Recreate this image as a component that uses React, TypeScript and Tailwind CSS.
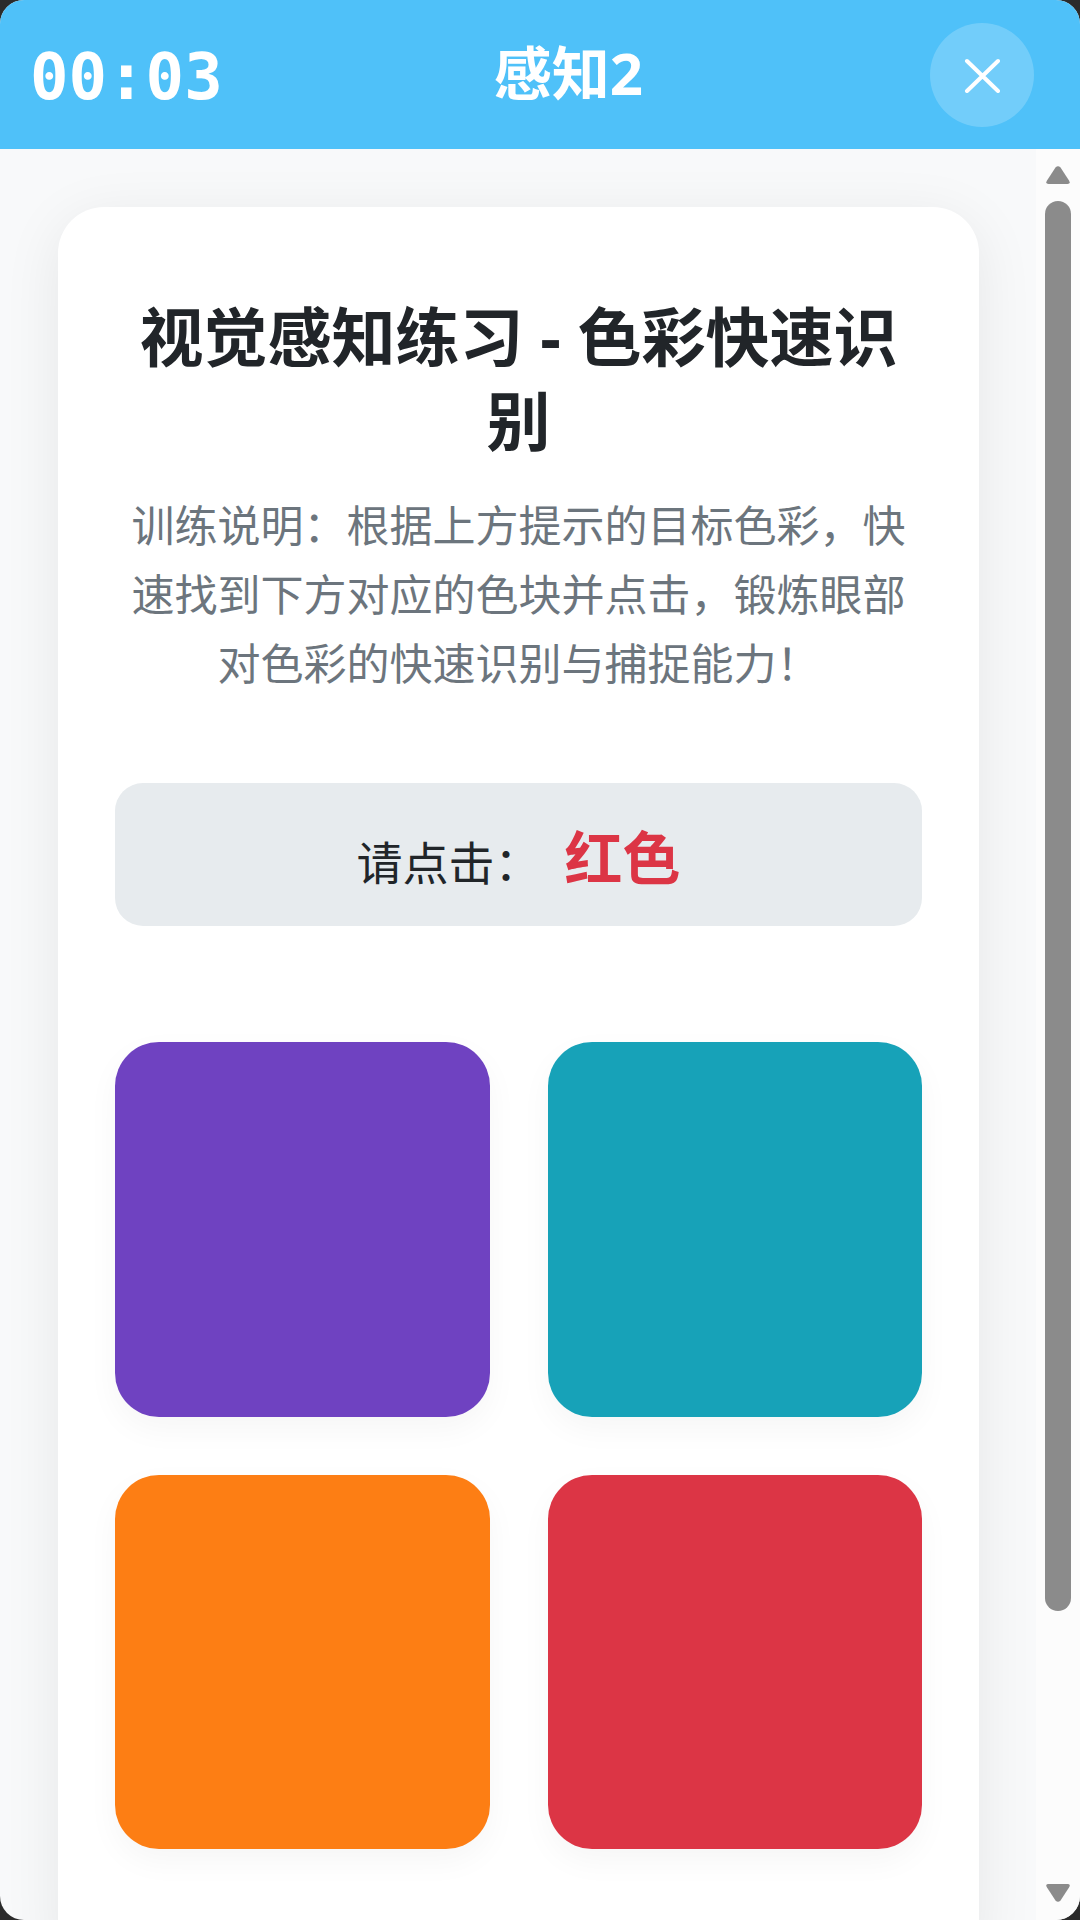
const tiles = [
  { name: "紫色", color: "bg-[#6f42c1]" },
  { name: "青色", color: "bg-[#17a2b8]" },
  { name: "橙色", color: "bg-[#fd7e14]" },
  { name: "红色", color: "bg-[#dc3545]" },
];

function Header() {
  return (
    <header className="flex h-[149px] shrink-0 items-center justify-between bg-[#4fc1f9] pr-[46px] pl-[30px] text-white">
      <time className="pt-1 font-['DejaVu_Sans_Mono',monospace] text-[64px] leading-none font-bold">
        00:03
      </time>
      <h1 className="mr-4 pb-1 text-[58px] leading-none font-bold">感知2</h1>
      <button
        type="button"
        aria-label="关闭"
        className="flex size-[104px] items-center justify-center rounded-full bg-white/20"
      >
        <svg viewBox="0 0 36 36" className="size-9" fill="none" stroke="currentColor" strokeWidth="4" strokeLinecap="round">
          <path d="M3 4 34 34M34 4 3 34" />
        </svg>
      </button>
    </header>
  );
}

function ScrollRail() {
  return (
    <div aria-hidden="true" className="flex w-11 shrink-0 flex-col items-center gap-[17px] bg-[#fcfcfc] pt-[17px] pb-[18px]">
      <svg viewBox="0 0 24 18" className="h-[18px] w-6 fill-[#8b8b8b]">
        <path d="M9.500 1.500Q12-1 14.500 1.500L23 14.500Q25 18 21.500 18H2.500Q-1 18 1 14.500Z" />
      </svg>
      <div className="flex w-full flex-1 flex-col items-center">
        <div className="grow-[11] basis-0 w-[26px] rounded-full bg-[#8b8b8b]" />
        <div className="grow-2 basis-0" />
      </div>
      <svg viewBox="0 0 24 18" className="h-[18px] w-6 fill-[#8b8b8b]">
        <path d="M9.500 16.500Q12 19 14.500 16.500L23 3.500Q25 0 21.500 0H2.500Q-1 0 1 3.500Z" />
      </svg>
    </div>
  );
}

export default function App() {
  return (
    <div className="h-screen bg-[#2b2b2b] font-['Open_Sans','Noto_Sans_CJK_SC',sans-serif]">
      <div className="flex h-full flex-col overflow-hidden rounded-3xl bg-[#f8f9fa]">
        <Header />
        <div className="flex min-h-0 flex-1">
          <main className="min-w-0 flex-1 overflow-y-auto p-[58px] pr-[57px] [scrollbar-width:none]">
            <section className="rounded-[46px] bg-white px-[57px] pt-[88px] pb-[116px] shadow-[0_12px_58px_rgba(0,0,0,0.08)]">
              <h2 className="text-center text-[64px] leading-[84px] font-bold text-[#212529]">
                视觉感知练习 - 色彩快速识别
              </h2>
              <p className="mt-7 text-center text-[43px] leading-[69px] text-[#6c757d]">
                训练说明：根据上方提示的目标色彩，快速找到下方对应的色块并点击，锻炼眼部对色彩的快速识别与捕捉能力！
              </p>
              <div className="mt-[85px] flex h-[143px] items-baseline justify-center rounded-[28px] bg-[#e7ebee] pt-[38px] text-[46px] leading-[74px] text-[#212529]">
                <span>请点击：</span>
                <strong className="ml-6 text-[58px] text-[#dc3545]">红色</strong>
              </div>
              <div className="mt-[116px] grid grid-cols-2 gap-[58px]">
                {tiles.map((tile) => (
                  <button
                    key={tile.name}
                    type="button"
                    aria-label={tile.name}
                    className={`aspect-square rounded-[44px] shadow-[0_12px_32px_rgba(0,0,0,0.04)] ${tile.color}`}
                  />
                ))}
              </div>
            </section>
          </main>
          <ScrollRail />
        </div>
      </div>
    </div>
  );
}
